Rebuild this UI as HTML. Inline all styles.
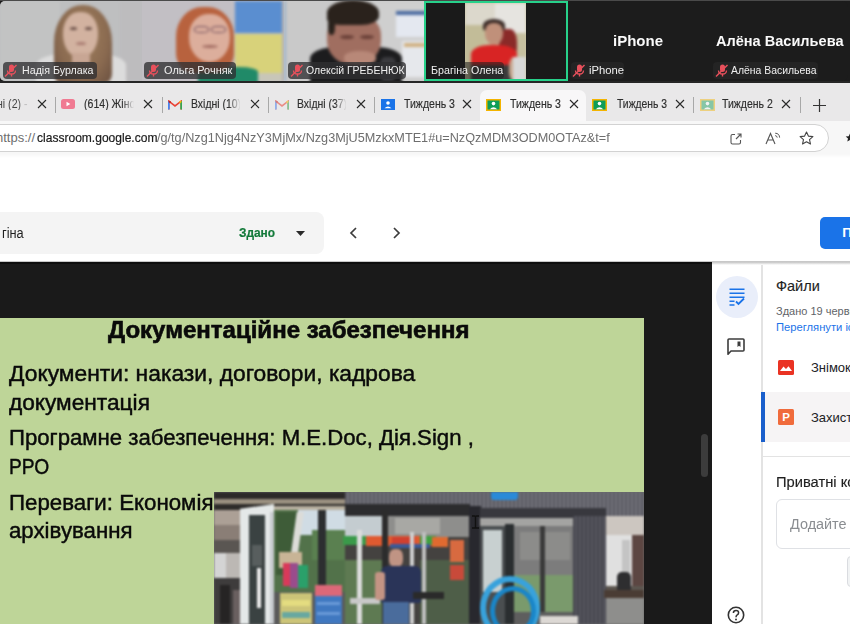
<!DOCTYPE html>
<html><head><meta charset="utf-8">
<style>
*{margin:0;padding:0;box-sizing:border-box}
html,body{width:850px;height:624px;overflow:hidden}
body{position:relative;font-family:"Liberation Sans",sans-serif;background:#fff}
.a{position:absolute}
.t{position:absolute;white-space:nowrap;line-height:1}
.blur{filter:blur(2px)}
</style></head><body>

<!-- ============ ZOOM STRIP ============ -->
<div class="a" id="zoom" style="left:0;top:0;width:850px;height:83px;background:#1c1c1c;overflow:hidden">
<div class="a" style="left:0;top:1px;width:142px;height:80px;overflow:hidden;border-radius:5px 0 0 5px;background:#bebfc0">
<div class="a" style="left:0;top:0;width:142px;height:80px;filter:blur(1.6px)">
<div class="a" style="left:0px;top:0px;width:60px;height:80px;background:#c2c3c3;"></div>
<div class="a" style="left:120px;top:0px;width:22px;height:80px;background:#bdbcbe;"></div>
<div class="a" style="left:36px;top:52px;width:90px;height:30px;background:#dcdcdc;border-radius:40% 40% 0 0"></div>
<div class="a" style="left:54px;top:4px;width:58px;height:78px;background:radial-gradient(ellipse at 50% 40%,#a0805e 0,#8a6a50 60%,#6a5040 100%);border-radius:48% 48% 12% 12%"></div>
<div class="a" style="left:63px;top:11px;width:35px;height:46px;background:#d2b2a0;border-radius:45% 45% 50% 50%"></div>
<div class="a" style="left:72px;top:52px;width:18px;height:10px;background:#c8a694;"></div>
<div class="a" style="left:70px;top:26px;width:7px;height:3px;background:#6a5048;border-radius:50%"></div>
<div class="a" style="left:85px;top:26px;width:7px;height:3px;background:#6a5048;border-radius:50%"></div>
<div class="a" style="left:76px;top:41px;width:10px;height:3px;background:#a87a70;border-radius:50%"></div>
</div>
</div>
<div class="a" style="left:3px;top:62px;width:94px;height:17px;background:rgba(48,48,50,0.78);border-radius:4px"></div>
<svg class="a" style="left:4px;top:64px" width="13" height="13" viewBox="0 0 13 13"><rect x="5" y="0.5" width="5" height="7.5" rx="2.5" fill="#e8505c"/><path d="M3.5 6.5 Q3.5 10 7.5 10 Q11.5 10 11.5 6.5" stroke="#e8505c" stroke-width="1.3" fill="none"/><rect x="6.8" y="10" width="1.4" height="2.5" fill="#e8505c"/><line x1="1" y1="12.5" x2="12.5" y2="1" stroke="#e8505c" stroke-width="1.4"/></svg>
<div class="t" style="left:21.8px;top:65.3px;font-size:11.5px;color:#f0f0f0;transform-origin:0 0;transform:scaleX(0.927)">Надія Бурлака</div>
<div class="a" style="left:142px;top:1px;width:142px;height:80px;overflow:hidden;background:#c2bfc4">
<div class="a" style="left:0;top:0;width:142px;height:80px;filter:blur(1.6px)">
<div class="a" style="left:93px;top:0px;width:49px;height:32px;background:#5a8ed0;"></div>
<div class="a" style="left:93px;top:33px;width:49px;height:39px;background:#d8d27a;"></div>
<div class="a" style="left:93px;top:72px;width:49px;height:8px;background:#c8c6b8;"></div>
<div class="a" style="left:140px;top:0px;width:2px;height:80px;background:#b0b0b0;"></div>
<div class="a" style="left:56px;top:66px;width:60px;height:16px;background:#208a68;border-radius:30% 30% 0 0"></div>
<div class="a" style="left:34px;top:6px;width:58px;height:66px;background:#b8623e;border-radius:45% 45% 30% 30%"></div>
<div class="a" style="left:47px;top:13px;width:41px;height:48px;background:#dcae9c;border-radius:45% 45% 50% 50%"></div>
<div class="a" style="left:52px;top:25px;width:15px;height:7px;border:1.5px solid #6a4a5a;border-radius:40%"></div>
<div class="a" style="left:69px;top:25px;width:15px;height:7px;border:1.5px solid #6a4a5a;border-radius:40%"></div>
<div class="a" style="left:60px;top:44px;width:16px;height:3px;background:#a06a60;border-radius:50%"></div>
</div>
</div>
<div class="a" style="left:144px;top:62px;width:92px;height:17px;background:rgba(48,48,50,0.78);border-radius:4px"></div>
<svg class="a" style="left:146px;top:64px" width="13" height="13" viewBox="0 0 13 13"><rect x="5" y="0.5" width="5" height="7.5" rx="2.5" fill="#e8505c"/><path d="M3.5 6.5 Q3.5 10 7.5 10 Q11.5 10 11.5 6.5" stroke="#e8505c" stroke-width="1.3" fill="none"/><rect x="6.8" y="10" width="1.4" height="2.5" fill="#e8505c"/><line x1="1" y1="12.5" x2="12.5" y2="1" stroke="#e8505c" stroke-width="1.4"/></svg>
<div class="t" style="left:163.8px;top:65.3px;font-size:11.5px;color:#f0f0f0;transform-origin:0 0;transform:scaleX(0.95)">Ольга Рочняк</div>
<div class="a" style="left:284px;top:1px;width:140px;height:80px;overflow:hidden;background:#c9c9c9">
<div class="a" style="left:0;top:0;width:141px;height:80px;filter:blur(1.5px)">
<div class="a" style="left:0px;top:0px;width:2px;height:80px;background:#9ab0c8;"></div>
<div class="a" style="left:80px;top:0px;width:62px;height:80px;background:#cfcfcf;"></div>
<div class="a" style="left:112px;top:10px;width:30px;height:26px;background:#e4e8f0;"></div>
<div class="a" style="left:112px;top:10px;width:30px;height:4px;background:#4a6aa0;"></div>
<div class="a" style="left:118px;top:40px;width:24px;height:36px;background:#e6e8ec;"></div>
<div class="a" style="left:120px;top:42px;width:22px;height:4px;background:#d0b080;"></div>
<div class="a" style="left:26px;top:46px;width:92px;height:38px;background:#1c1c1e;border-radius:30% 30% 0 0"></div>
<div class="a" style="left:43px;top:14px;width:54px;height:50px;background:#a06e60;border-radius:40% 40% 48% 48%"></div>
<div class="a" style="left:43px;top:-1px;width:52px;height:25px;background:#2a221c;border-radius:50% 50% 35% 25%"></div>
<div class="a" style="left:44px;top:16px;width:7px;height:18px;background:#2a221c;border-radius:40%"></div>
<div class="a" style="left:56px;top:34px;width:14px;height:4px;background:#6a4038;border-radius:50%"></div>
<div class="a" style="left:76px;top:34px;width:14px;height:4px;background:#6a4038;border-radius:50%"></div>
<div class="a" style="left:60px;top:50px;width:32px;height:14px;background:#b88878;border-radius:45%"></div>
<div class="a" style="left:96px;top:56px;width:16px;height:24px;background:#3a3a3e;border-radius:30%"></div>
</div>
</div>
<div class="a" style="left:288px;top:62px;width:118px;height:17px;background:rgba(48,48,50,0.78);border-radius:4px"></div>
<svg class="a" style="left:290px;top:64px" width="13" height="13" viewBox="0 0 13 13"><rect x="5" y="0.5" width="5" height="7.5" rx="2.5" fill="#e8505c"/><path d="M3.5 6.5 Q3.5 10 7.5 10 Q11.5 10 11.5 6.5" stroke="#e8505c" stroke-width="1.3" fill="none"/><rect x="6.8" y="10" width="1.4" height="2.5" fill="#e8505c"/><line x1="1" y1="12.5" x2="12.5" y2="1" stroke="#e8505c" stroke-width="1.4"/></svg>
<div class="t" style="left:305.8px;top:65.3px;font-size:11.5px;color:#f0f0f0;transform-origin:0 0;transform:scaleX(0.91)">Олексій ГРЕБЕНЮК</div>
<div class="a" style="left:424px;top:1px;width:144px;height:80px;background:#1a1a1a;border:2px solid #27d18a;overflow:hidden">
<div class="a" style="left:39px;top:0;width:61px;height:80px;overflow:hidden;background:#c6c0a0">
<div class="a" style="left:0;top:0;width:61px;height:80px;filter:blur(1.4px)">
<div class="a" style="left:0px;top:0px;width:61px;height:22px;background:#dcd8cc;"></div>
<div class="a" style="left:30px;top:0px;width:31px;height:30px;background:#e6e4e0;"></div>
<div class="a" style="left:0px;top:22px;width:20px;height:58px;background:#c2bc98;"></div>
<div class="a" style="left:34px;top:26px;width:18px;height:32px;background:#8a2a28;border-radius:40%"></div>
<div class="a" style="left:18px;top:16px;width:22px;height:12px;background:#3a2a26;border-radius:50% 50% 20% 20%"></div>
<div class="a" style="left:20px;top:20px;width:18px;height:22px;background:#c0907a;border-radius:40% 40% 50% 50%"></div>
<div class="a" style="left:6px;top:42px;width:46px;height:24px;background:#d82424;border-radius:40% 40% 10% 10%"></div>
<div class="a" style="left:6px;top:62px;width:46px;height:18px;background:#3a3a3a;"></div>
<div class="a" style="left:44px;top:54px;width:12px;height:24px;background:#c8a890;border-radius:40%"></div>
<div class="a" style="left:48px;top:54px;width:13px;height:26px;background:#d8d8d8;"></div>
</div>
</div>
</div>
<div class="a" style="left:428px;top:62px;width:76px;height:17px;background:rgba(30,30,30,0.55);border-radius:4px"></div>
<div class="t" style="left:431px;top:65.3px;font-size:11.5px;color:#f0f0f0;transform-origin:0 0;transform:scaleX(0.93)">Брагіна Олена</div>
<div class="a" style="left:568px;top:1px;width:142px;height:80px;background:#1c1c1c;"></div>
<div class="t" style="left:613.2px;top:33.6px;font-size:14.5px;font-weight:bold;color:#fafafa;transform-origin:0 0;transform:scaleX(1.035)">iPhone</div>
<div class="a" style="left:571px;top:62px;width:53px;height:17px;background:#242424;border-radius:4px"></div>
<svg class="a" style="left:572px;top:64px" width="13" height="13" viewBox="0 0 13 13"><rect x="5" y="0.5" width="5" height="7.5" rx="2.5" fill="#e8505c"/><path d="M3.5 6.5 Q3.5 10 7.5 10 Q11.5 10 11.5 6.5" stroke="#e8505c" stroke-width="1.3" fill="none"/><rect x="6.8" y="10" width="1.4" height="2.5" fill="#e8505c"/><line x1="1" y1="12.5" x2="12.5" y2="1" stroke="#e8505c" stroke-width="1.4"/></svg>
<div class="t" style="left:589.3px;top:65.3px;font-size:11.5px;color:#f0f0f0;transform-origin:0 0;transform:scaleX(0.98)">iPhone</div>
<div class="a" style="left:710px;top:1px;width:138px;height:80px;background:#1c1c1c;border-radius:0 6px 6px 0"></div>
<div class="t" style="left:716.1px;top:33.6px;font-size:14.5px;font-weight:bold;color:#fafafa;transform-origin:0 0;transform:scaleX(1.003)">Алёна Васильева</div>
<div class="a" style="left:713px;top:62px;width:105px;height:17px;background:#242424;border-radius:4px"></div>
<svg class="a" style="left:715px;top:64px" width="13" height="13" viewBox="0 0 13 13"><rect x="5" y="0.5" width="5" height="7.5" rx="2.5" fill="#e8505c"/><path d="M3.5 6.5 Q3.5 10 7.5 10 Q11.5 10 11.5 6.5" stroke="#e8505c" stroke-width="1.3" fill="none"/><rect x="6.8" y="10" width="1.4" height="2.5" fill="#e8505c"/><line x1="1" y1="12.5" x2="12.5" y2="1" stroke="#e8505c" stroke-width="1.4"/></svg>
<div class="t" style="left:730.5px;top:65.3px;font-size:11.5px;color:#f0f0f0;transform-origin:0 0;transform:scaleX(0.905)">Алёна Васильева</div>
<div class="a" style="left:0;top:0;width:850px;height:1px;background:#4a4a4a"></div>
<div class="a" style="left:0;top:81px;width:850px;height:2px;background:#262626"></div>
</div>

<!-- ============ TAB BAR ============ -->
<div class="a" id="tabs" style="left:0;top:83px;width:850px;height:38px;background:#e9e8e9;overflow:hidden">
<div class="a" style="left:480px;top:7px;width:106px;height:31px;background:#f8f7f8;border-radius:7px 7px 0 0"></div>
<div class="t" style="left:-2.7px;top:14.84px;font-size:12px;color:#444;transform-origin:0 0;transform:scaleX(0.88);-webkit-mask-image:linear-gradient(90deg,#000 70%,rgba(0,0,0,0.25) 90%)">ні (2) -</div>
<svg class="a" style="left:37px;top:16.400000000000006px" width="10" height="10" viewBox="0 0 10 10"><path d="M1 1L9 9M9 1L1 9" stroke="#2a2a2a" stroke-width="1.1"/></svg>
<div class="a" style="left:55px;top:13.5px;width:1px;height:16.0px;background:#a8a8a8;"></div>
<svg class="a" style="left:61px;top:16px" width="14" height="10" viewBox="0 0 14 10"><rect x="0" y="0" width="14" height="10" rx="2.5" fill="#f07a92"/><path d="M5.5 2.8L9.3 5L5.5 7.2Z" fill="#fff"/></svg>
<div class="t" style="left:84.2px;top:14.84px;font-size:12px;color:#2e2e2e;-webkit-text-stroke:0.15px #2e2e2e;transform-origin:0 0;transform:scaleX(0.88);-webkit-mask-image:linear-gradient(90deg,#000 75%,transparent 98%)">(614) Жіно</div>
<svg class="a" style="left:143px;top:16.400000000000006px" width="10" height="10" viewBox="0 0 10 10"><path d="M1 1L9 9M9 1L1 9" stroke="#2a2a2a" stroke-width="1.1"/></svg>
<div class="a" style="left:161.5px;top:13.5px;width:1.0px;height:16.0px;background:#a8a8a8;"></div>
<svg class="a" style="left:167.5px;top:16.5px;opacity:1" width="14" height="10" viewBox="0 0 14 10"><path d="M0.8 9.5V1.2L7 6L13.2 1.2V9.5" fill="none" stroke="#ea4335" stroke-width="1.6"/><path d="M0.8 9.5V1.2" stroke="#4285f4" stroke-width="1.8"/><path d="M13.2 9.5V1.2" stroke="#34a853" stroke-width="1.8"/><path d="M11.5 2.5L13.2 1.2" stroke="#fbbc04" stroke-width="1.8"/><path d="M0.8 1.2L2.6 2.5" stroke="#c5221f" stroke-width="1.8"/></svg>
<div class="t" style="left:190.7px;top:14.84px;font-size:12px;color:#2e2e2e;-webkit-text-stroke:0.15px #2e2e2e;transform-origin:0 0;transform:scaleX(0.87);-webkit-mask-image:linear-gradient(90deg,#000 75%,transparent 98%)">Вхідні (10)</div>
<svg class="a" style="left:249.5px;top:16.400000000000006px" width="10" height="10" viewBox="0 0 10 10"><path d="M1 1L9 9M9 1L1 9" stroke="#2a2a2a" stroke-width="1.1"/></svg>
<div class="a" style="left:268px;top:13.5px;width:1px;height:16.0px;background:#a8a8a8;"></div>
<svg class="a" style="left:274.5px;top:16.5px;opacity:0.55" width="14" height="10" viewBox="0 0 14 10"><path d="M0.8 9.5V1.2L7 6L13.2 1.2V9.5" fill="none" stroke="#ea4335" stroke-width="1.6"/><path d="M0.8 9.5V1.2" stroke="#4285f4" stroke-width="1.8"/><path d="M13.2 9.5V1.2" stroke="#34a853" stroke-width="1.8"/><path d="M11.5 2.5L13.2 1.2" stroke="#fbbc04" stroke-width="1.8"/><path d="M0.8 1.2L2.6 2.5" stroke="#c5221f" stroke-width="1.8"/></svg>
<div class="t" style="left:297.1px;top:14.84px;font-size:12px;color:#2e2e2e;-webkit-text-stroke:0.15px #2e2e2e;transform-origin:0 0;transform:scaleX(0.87);-webkit-mask-image:linear-gradient(90deg,#000 75%,transparent 98%)">Вхідні (37)</div>
<svg class="a" style="left:356px;top:16.400000000000006px" width="10" height="10" viewBox="0 0 10 10"><path d="M1 1L9 9M9 1L1 9" stroke="#2a2a2a" stroke-width="1.1"/></svg>
<div class="a" style="left:374.3px;top:13.5px;width:1.0px;height:16.0px;background:#a8a8a8;"></div>
<svg class="a" style="left:380.5px;top:16px" width="14" height="11" viewBox="0 0 14 11"><rect width="14" height="11" fill="#1a73e8"/><circle cx="7" cy="4" r="1.8" fill="#fff"/><path d="M3.5 9.3Q7 5.6 10.5 9.3Z" fill="#fff"/></svg>
<div class="t" style="left:403.5px;top:14.84px;font-size:12px;color:#2e2e2e;-webkit-text-stroke:0.15px #2e2e2e;transform-origin:0 0;transform:scaleX(0.877)">Тиждень 3</div>
<svg class="a" style="left:462.4px;top:16.400000000000006px" width="10" height="10" viewBox="0 0 10 10"><path d="M1 1L9 9M9 1L1 9" stroke="#2a2a2a" stroke-width="1.1"/></svg>
<svg class="a" style="left:486px;top:15.5px;opacity:1" width="15" height="12" viewBox="0 0 15 12"><rect x="0.75" y="0.75" width="13.5" height="10.5" fill="#0f9d58" stroke="#f4b400" stroke-width="1.5"/><circle cx="7.5" cy="4.6" r="1.8" fill="#fff"/><path d="M3.8 10.2 Q7.5 6.3 11.2 10.2Z" fill="#fff"/></svg>
<div class="t" style="left:510px;top:14.84px;font-size:12px;color:#2e2e2e;-webkit-text-stroke:0.15px #2e2e2e;transform-origin:0 0;transform:scaleX(0.877)">Тиждень 3</div>
<svg class="a" style="left:568.8px;top:16.400000000000006px" width="10" height="10" viewBox="0 0 10 10"><path d="M1 1L9 9M9 1L1 9" stroke="#2a2a2a" stroke-width="1.1"/></svg>
<svg class="a" style="left:592.2px;top:15.5px;opacity:1" width="15" height="12" viewBox="0 0 15 12"><rect x="0.75" y="0.75" width="13.5" height="10.5" fill="#0f9d58" stroke="#f4b400" stroke-width="1.5"/><circle cx="7.5" cy="4.6" r="1.8" fill="#fff"/><path d="M3.8 10.2 Q7.5 6.3 11.2 10.2Z" fill="#fff"/></svg>
<div class="t" style="left:616.5px;top:14.84px;font-size:12px;color:#2e2e2e;-webkit-text-stroke:0.15px #2e2e2e;transform-origin:0 0;transform:scaleX(0.862)">Тиждень 3</div>
<svg class="a" style="left:675.4px;top:16.400000000000006px" width="10" height="10" viewBox="0 0 10 10"><path d="M1 1L9 9M9 1L1 9" stroke="#2a2a2a" stroke-width="1.1"/></svg>
<div class="a" style="left:692.9px;top:13.5px;width:1.0px;height:16.0px;background:#a8a8a8;"></div>
<svg class="a" style="left:699.6px;top:15.5px;opacity:0.45" width="15" height="12" viewBox="0 0 15 12"><rect x="0.75" y="0.75" width="13.5" height="10.5" fill="#0f9d58" stroke="#f4b400" stroke-width="1.5"/><circle cx="7.5" cy="4.6" r="1.8" fill="#fff"/><path d="M3.8 10.2 Q7.5 6.3 11.2 10.2Z" fill="#fff"/></svg>
<div class="t" style="left:721.9px;top:14.84px;font-size:12px;color:#2e2e2e;-webkit-text-stroke:0.15px #2e2e2e;transform-origin:0 0;transform:scaleX(0.875)">Тиждень 2</div>
<svg class="a" style="left:781.2px;top:16.400000000000006px" width="10" height="10" viewBox="0 0 10 10"><path d="M1 1L9 9M9 1L1 9" stroke="#2a2a2a" stroke-width="1.1"/></svg>
<div class="a" style="left:799.6px;top:13.5px;width:1.0px;height:16.0px;background:#a8a8a8;"></div>
<svg class="a" style="left:813px;top:15.799999999999997px" width="13" height="13" viewBox="0 0 13 13"><path d="M6.5 0V13M0 6.5H13" stroke="#333" stroke-width="1.2"/></svg>
</div>

<!-- ============ TOOLBAR ============ -->
<div class="a" id="toolbar" style="left:0;top:121px;width:850px;height:38px;background:linear-gradient(#f7f7f7 0,#f7f7f7 33px,#fff 37px);overflow:hidden">
  <div class="a" style="left:-20px;top:2.5px;width:849px;height:28px;background:#fff;border:1px solid #d2d2d2;border-radius:14px"></div>
<div class="t" style="left:-4px;top:10.20px;font-size:13px;color:#6e6e6e">https://</div>
<div class="t" style="left:36.7px;top:10.20px;font-size:13px;color:#1a1a1a;-webkit-text-stroke:0.2px #1a1a1a;transform-origin:0 0;transform:scaleX(0.926)">classroom.google.com</div>
<div class="t" style="left:157.2px;top:10.20px;font-size:13px;color:#6e6e6e;transform-origin:0 0;transform:scaleX(0.975)">/g/tg/Nzg1Njg4NzY3MjMx/Nzg3MjU5MzkxMTE1#u=NzQzMDM3ODM0OTAz&amp;t=f</div>
<svg class="a" style="left:729.5px;top:11.5px" width="12" height="12" viewBox="0 0 12 12"><path d="M5 1.5H2.5Q1 1.5 1 3V9.5Q1 11 2.5 11H9Q10.5 11 10.5 9.5V7" fill="none" stroke="#555" stroke-width="1.1"/><path d="M6 6L11 1M7.5 1H11V4.5" fill="none" stroke="#555" stroke-width="1.1"/></svg>
<svg class="a" style="left:764.5px;top:10.5px" width="16" height="13" viewBox="0 0 16 13"><path d="M1 12L5.5 1.5L10 12M2.7 8H8.3" fill="none" stroke="#555" stroke-width="1.1"/><path d="M10.2 3.6A2.2 2.2 0 0 1 12.2 5.6M10.2 1.2A4.6 4.6 0 0 1 14.6 5.6" fill="none" stroke="#555" stroke-width="1"/></svg>
<svg class="a" style="left:799px;top:9.5px" width="15" height="14" viewBox="0 0 15 14"><path d="M7.5 1L9.4 5.1L13.9 5.6L10.5 8.6L11.5 13L7.5 10.7L3.5 13L4.5 8.6L1.1 5.6L5.6 5.1Z" fill="none" stroke="#444" stroke-width="1.1" stroke-linejoin="round"/></svg>
<svg class="a" style="left:845px;top:12px" width="10" height="10" viewBox="0 0 10 10"><path d="M5 0.5L6.3 3.3L9.3 3.6L7 5.6L7.7 8.6L5 7L2.3 8.6L3 5.6L0.7 3.6L3.7 3.3Z" fill="#222"/></svg>

</div>

<!-- ============ CLASSROOM HEADER ============ -->
<div class="a" id="header" style="left:0;top:159px;width:850px;height:103px;background:#fff">
  <div class="a" style="left:-20px;top:53px;width:343.5px;height:41.5px;background:#f4f4f4;border-radius:8px"></div>
  <div class="t" style="left:1.6px;top:67.5px;font-size:13.8px;color:#1f1f1f;transform-origin:0 0;transform:scaleX(0.93)">гіна</div>
  <div class="t" style="left:238.9px;top:66.80px;font-size:13px;font-weight:bold;color:#137a3a;-webkit-text-stroke:0.2px #137a3a;transform-origin:0 0;transform:scaleX(0.914)">Здано</div>
  <svg class="a" style="left:295.5px;top:72px" width="9" height="5" viewBox="0 0 9 5"><path d="M0 0H9L4.5 5Z" fill="#2a2a2a"/></svg>
  <svg class="a" style="left:349px;top:68px" width="9" height="12" viewBox="0 0 9 12"><path d="M7 1L2 6L7 11" fill="none" stroke="#3c3c3c" stroke-width="1.7"/></svg>
  <svg class="a" style="left:392px;top:68px" width="9" height="12" viewBox="0 0 9 12"><path d="M2 1L7 6L2 11" fill="none" stroke="#3c3c3c" stroke-width="1.7"/></svg>
  <div class="a" style="left:820px;top:58px;width:60px;height:31.5px;background:#1a73e8;border-radius:5px"></div>
  <div class="t" style="left:842.2px;top:67.27px;font-size:13.5px;font-weight:bold;color:#fff">П</div>
  <div class="a" style="left:0;top:101.5px;width:850px;height:1.5px;background:#c8c8c8"></div>
</div>

<!-- ============ VIEWER ============ -->
<div class="a" id="viewer" style="left:0;top:262px;width:712px;height:362px;background:#1a1a1a;overflow:hidden">
  <div class="a" style="left:0;top:0;width:712px;height:2px;background:#0e0e0e"></div>
  <div class="a" id="slide" style="left:0;top:56px;width:644px;height:306px;background:#bed598;overflow:hidden">
    <div class="t" style="left:108px;top:0.5px;font-size:23px;font-weight:bold;color:#0a0a0a;-webkit-text-stroke:0.6px #0a0a0a;transform-origin:0 0;transform:scaleX(1.0445)">Документаційне забезпечення</div>
    <div class="t" style="left:8.5px;top:45.4px;font-size:22px;color:#0a0a0a;-webkit-text-stroke:0.45px #0a0a0a;transform-origin:0 0;transform:scaleX(1.037)">Документи: накази, договори, кадрова</div>
    <div class="t" style="left:8.5px;top:73.7px;font-size:22px;color:#0a0a0a;-webkit-text-stroke:0.45px #0a0a0a;transform-origin:0 0;transform:scaleX(1.031)">документація</div>
    <div class="t" style="left:8.5px;top:109.4px;font-size:22px;color:#0a0a0a;-webkit-text-stroke:0.45px #0a0a0a;transform-origin:0 0;transform:scaleX(1.008)">Програмне забезпечення: M.E.Doc, Дія.Sign ,</div>
    <div class="t" style="left:8.5px;top:137.8px;font-size:22px;color:#0a0a0a;-webkit-text-stroke:0.45px #0a0a0a;transform-origin:0 0;transform:scaleX(0.872)">РРО</div>
    <div class="t" style="left:8.5px;top:173.6px;font-size:22px;color:#0a0a0a;-webkit-text-stroke:0.45px #0a0a0a;transform-origin:0 0;transform:scaleX(1.013)">Переваги: Економія</div>
    <div class="t" style="left:8.5px;top:201.9px;font-size:22px;color:#0a0a0a;-webkit-text-stroke:0.45px #0a0a0a;transform-origin:0 0;transform:scaleX(1.011)">архівування</div>
    <div class="a" id="photo" style="left:214px;top:174px;width:430px;height:132px;background:#6a6a6a;overflow:hidden"><div class="a" style="left:0;top:0;width:430px;height:132px;filter:blur(1px)">
<div class="a" style="left:0px;top:0px;width:430px;height:132px;background:#5a5a5a;"></div>
<div class="a" style="left:0px;top:13px;width:31px;height:40px;background:#8a7e76;"></div>
<div class="a" style="left:0px;top:18px;width:31px;height:15px;background:#aca096;"></div>
<div class="a" style="left:0px;top:48px;width:31px;height:16px;background:#5a5652;"></div>
<div class="a" style="left:0px;top:61px;width:31px;height:29px;background:#d4d4d4;"></div>
<div class="a" style="left:12px;top:61px;width:14px;height:47px;background:#bcb8b4;"></div>
<div class="a" style="left:0px;top:86px;width:31px;height:46px;background:#3e3c3c;"></div>
<div class="a" style="left:6px;top:93px;width:10px;height:39px;background:#262424;"></div>
<div class="a" style="left:19px;top:98px;width:7px;height:34px;background:#6a6060;"></div>
<div class="a" style="left:0px;top:0px;width:136px;height:7px;background:#2c2a28;"></div>
<div class="a" style="left:0px;top:7px;width:136px;height:5px;background:#9a9080;"></div>
<div class="a" style="left:0px;top:12px;width:136px;height:6px;background:#2e2c2a;"></div>
<div class="a" style="left:58px;top:14px;width:73px;height:5px;background:#b8b0a0;"></div>
<div class="a" style="left:59px;top:18px;width:72px;height:82px;background:#52724a;"></div>
<div class="a" style="left:84px;top:18px;width:47px;height:25px;background:#d0dce4;"></div>
<div class="a" style="left:62px;top:20px;width:22px;height:63px;background:#3e5c38;"></div>
<div class="a" style="left:98px;top:38px;width:33px;height:30px;background:#5a8050;"></div>
<div class="a" style="left:78px;top:20px;width:7px;height:68px;background:#dcdcd8;transform:skewX(-8deg)"></div>
<div class="a" style="left:104px;top:18px;width:8px;height:82px;background:#2c2e30;"></div>
<div class="a" style="left:65px;top:60px;width:23px;height:16px;background:#c8b496;"></div>
<div class="a" style="left:69px;top:71px;width:7px;height:23px;background:#d83a5a;"></div>
<div class="a" style="left:76px;top:71px;width:8px;height:25px;background:#9a4c8c;"></div>
<div class="a" style="left:84px;top:73px;width:10px;height:23px;background:#2aa06a;"></div>
<div class="a" style="left:26px;top:12px;width:34px;height:120px;background:#e4e8e8;clip-path:polygon(0 4%,100% 0,100% 100%,0 100%)"></div>
<div class="a" style="left:35px;top:23px;width:16px;height:109px;background:#3a4242;"></div>
<div class="a" style="left:38px;top:53px;width:10px;height:21px;background:#585e5e;"></div>
<div class="a" style="left:43px;top:76px;width:4px;height:40px;background:#ececec;"></div>
<div class="a" style="left:56px;top:20px;width:4px;height:112px;background:#c8ccd0;"></div>
<div class="a" style="left:66px;top:101px;width:32px;height:31px;background:#ccc478;"></div>
<div class="a" style="left:68px;top:108px;width:28px;height:6px;background:#e4dc80;"></div>
<div class="a" style="left:68px;top:120px;width:28px;height:6px;background:#68a8a0;"></div>
<div class="a" style="left:101px;top:93px;width:27px;height:39px;background:#4078c0;"></div>
<div class="a" style="left:101px;top:93px;width:27px;height:11px;background:#dc6878;"></div>
<div class="a" style="left:103px;top:110px;width:23px;height:3px;background:#6a9ad8;"></div>
<div class="a" style="left:103px;top:120px;width:23px;height:3px;background:#6a9ad8;"></div>
<div class="a" style="left:131px;top:0px;width:299px;height:27px;background:#64646c;background-image:repeating-linear-gradient(90deg,#5a5a62 0 2px,#72727a 2px 4px);clip-path:polygon(0 0,100% 0,100% 100%,0 48%)"></div>
<div class="a" style="left:131px;top:12px;width:125px;height:12px;background:#2c2c2e;"></div>
<div class="a" style="left:131px;top:24px;width:125px;height:108px;background:#444240;"></div>
<div class="a" style="left:131px;top:24px;width:125px;height:21px;background:#8e8e8c;"></div>
<div class="a" style="left:131px;top:24px;width:37px;height:24px;background:#c4ccd0;"></div>
<div class="a" style="left:181px;top:26px;width:45px;height:16px;background:#a8a8a4;"></div>
<div class="a" style="left:131px;top:68px;width:37px;height:64px;background:#5e7a52;"></div>
<div class="a" style="left:206px;top:68px;width:50px;height:64px;background:#4e5e48;"></div>
<div class="a" style="left:129px;top:44px;width:23px;height:9px;background:#3a9a4a;"></div>
<div class="a" style="left:152px;top:44px;width:66px;height:10px;background:#e05a30;"></div>
<div class="a" style="left:178px;top:45px;width:23px;height:7px;background:#d04030;"></div>
<div class="a" style="left:206px;top:44px;width:16px;height:9px;background:#40a040;"></div>
<div class="a" style="left:218px;top:45px;width:16px;height:10px;background:#e06a30;"></div>
<div class="a" style="left:176px;top:52px;width:40px;height:4px;background:#3a5a9a;"></div>
<div class="a" style="left:143px;top:38px;width:5px;height:94px;background:#dcdcdc;"></div>
<div class="a" style="left:196px;top:40px;width:4px;height:92px;background:#d0d0d0;"></div>
<div class="a" style="left:208px;top:40px;width:4px;height:92px;background:#c0c0c0;"></div>
<div class="a" style="left:168px;top:18px;width:6px;height:114px;background:#2c2c2c;"></div>
<div class="a" style="left:236px;top:48px;width:14px;height:22px;background:#d86a40;"></div>
<div class="a" style="left:236px;top:73px;width:14px;height:15px;background:#c84a3a;"></div>
<div class="a" style="left:136px;top:106px;width:30px;height:6px;background:#c8c8c8;"></div>
<div class="a" style="left:175px;top:57px;width:14px;height:18px;background:#c09484;border-radius:40%"></div>
<div class="a" style="left:167px;top:74px;width:40px;height:37px;background:#2a3458;border-radius:6px 6px 2px 2px"></div>
<div class="a" style="left:161px;top:80px;width:10px;height:28px;background:#c49484;border-radius:3px"></div>
<div class="a" style="left:169px;top:110px;width:26px;height:22px;background:#4a6c9c;"></div>
<div class="a" style="left:199px;top:100px;width:31px;height:7px;background:#2a2a2a;"></div>
<div class="a" style="left:255px;top:14px;width:12px;height:118px;background:#28282e;"></div>
<div class="a" style="left:277px;top:0px;width:27px;height:8px;background:#2a8ad8;border-radius:0 0 3px 3px"></div>
<div class="a" style="left:266px;top:16px;width:126px;height:16px;background:#38383e;"></div>
<div class="a" style="left:266px;top:26px;width:96px;height:8px;background:#a4a4a2;"></div>
<div class="a" style="left:266px;top:34px;width:36px;height:98px;background:#4a4e50;"></div>
<div class="a" style="left:269px;top:38px;width:19px;height:62px;background:#c8d0d0;"></div>
<div class="a" style="left:291px;top:32px;width:9px;height:100px;background:#2a2e30;"></div>
<div class="a" style="left:300px;top:34px;width:60px;height:86px;background:#7c7c7c;"></div>
<div class="a" style="left:306px;top:40px;width:50px;height:28px;background:#8c8c8a;"></div>
<div class="a" style="left:300px;top:83px;width:60px;height:37px;background:#7a9a6c;"></div>
<div class="a" style="left:326px;top:34px;width:5px;height:86px;background:#3a3a3a;"></div>
<div class="a" style="left:300px;top:120px;width:60px;height:12px;background:#5e5e5e;"></div>
<div class="a" style="left:359px;top:24px;width:33px;height:108px;background:#4c4c54;background-image:repeating-linear-gradient(90deg,#46464e 0 2px,#585860 2px 4px)"></div>
<div class="a" style="left:392px;top:24px;width:38px;height:19px;background:#ccc6c0;"></div>
<div class="a" style="left:392px;top:43px;width:26px;height:51px;background:#e0e0e0;"></div>
<div class="a" style="left:408px;top:48px;width:8px;height:46px;background:#c4c4c4;"></div>
<div class="a" style="left:418px;top:43px;width:12px;height:61px;background:#5c4642;"></div>
<div class="a" style="left:392px;top:94px;width:38px;height:38px;background:#5c5650;"></div>
<div class="a" style="left:403px;top:80px;width:14px;height:20px;background:#2e2e30;border-radius:5px 5px 2px 2px"></div>
<div class="a" style="left:390px;top:98px;width:40px;height:8px;background:#4a3c34;"></div>
<div class="a" style="left:392px;top:106px;width:38px;height:26px;background:#8e8e8c;"></div>
<div class="a" style="left:266px;top:84px;width:60px;height:64px;border:6px solid #38a2dc;border-radius:50%"></div>
<div class="a" style="left:276px;top:94px;width:46px;height:50px;border:5px solid #1a86c8;border-radius:50%"></div>
<div class="a" style="left:326px;top:124px;width:38px;height:8px;background:#dcd8d4;"></div>
</div>
    </div>
    <svg class="a" style="left:471px;top:197px" width="9" height="14" viewBox="0 0 9 14"><path d="M1 1H3.5Q4.5 1 4.5 2V12Q4.5 13 3.5 13H1M8 1H5.5Q4.5 1 4.5 2V12Q4.5 13 5.5 13H8" fill="none" stroke="#111" stroke-width="1.4"/></svg>

  </div>
  <div class="a" style="left:701px;top:172px;width:7px;height:43px;background:#3c3c3c;border-radius:4px"></div>
</div>

<!-- ============ SIDEBAR ============ -->
<div class="a" id="sidebar" style="left:712px;top:262px;width:138px;height:362px;background:#fff;overflow:hidden">
  <div class="a" style="left:49px;top:0;width:1.5px;height:362px;background:#e3e3e3"></div>
  <div class="a" style="left:3.5px;top:14px;width:42px;height:42px;border-radius:50%;background:#e9eefa"></div>
  <svg class="a" style="left:16.5px;top:26px" width="16" height="18" viewBox="0 0 16 18"><path d="M0.5 1.2H15.5M0.5 5.2H15.5M0.5 9.2H15.5M0.5 13.2H5.5M0.5 17H5.5" stroke="#1a73e8" stroke-width="1.6"/><path d="M7 13.5L9.5 16L15 10.5" fill="none" stroke="#1a73e8" stroke-width="1.8"/></svg>
  <svg class="a" style="left:15px;top:76px" width="18" height="17" viewBox="0 0 18 17"><path d="M1 16.2V2Q1 1 2 1H16Q17 1 17 2V12Q17 13 16 13H4Z" fill="none" stroke="#3c3c3c" stroke-width="1.6" stroke-linejoin="round"/><path d="M10.5 3.5H13.5V9L12 7.8L10.5 9Z" fill="#3c3c3c"/></svg>
  <svg class="a" style="left:15px;top:343.5px" width="18" height="18" viewBox="0 0 18 18"><circle cx="9" cy="9" r="7.7" fill="none" stroke="#333" stroke-width="1.6"/><path d="M6.4 7.1Q6.4 4.6 9 4.6Q11.6 4.6 11.6 6.8Q11.6 8.2 10.2 8.9Q9 9.6 9 11.3" fill="none" stroke="#333" stroke-width="1.5"/><circle cx="9" cy="13.5" r="0.95" fill="#333"/></svg>

  <div class="a" style="left:0;top:0;width:138px;height:3px;background:linear-gradient(#c4c4c4,#fff)"></div>

  <div class="t" style="left:64.00px;top:17.3px;font-size:14.5px;color:#1f1f1f;-webkit-text-stroke:0.15px #1f1f1f">Файли</div>
  <div class="t" style="left:64.00px;top:43.59px;font-size:11px;color:#5f6368">Здано 19 червня</div>
  <div class="t" style="left:64.00px;top:60.22px;font-size:11.2px;color:#1a73e8">Переглянути історію</div>

  <div class="a" style="left:66.10px;top:97.69999999999999px;width:15.7px;height:15.5px;background:#ea3323;border-radius:1.5px"></div>
  <svg class="a" style="left:68.00px;top:104px" width="12" height="5" viewBox="0 0 12 5"><path d="M0 5L3.5 0.6L6 3L8.5 0.3L12 5Z" fill="#fff"/></svg>
  <div class="t" style="left:99.00px;top:99.00px;font-size:13px;color:#202124">Знімок екрана</div>

  <div class="a" style="left:52.5px;top:130.3px;width:90px;height:49.7px;background:#f6f4f5"></div>
  <div class="a" style="left:49.4px;top:130.3px;width:3.4px;height:49.7px;background:#1a5fcc"></div>
  <div class="a" style="left:66.10px;top:147px;width:15.7px;height:15.8px;background:#f06b3c;border-radius:1.5px"></div>
  <div class="t" style="left:70.30px;top:149.77px;font-size:11.5px;font-weight:bold;color:#fff">P</div>
  <div class="t" style="left:99.00px;top:148.90px;font-size:13px;color:#202124">Захист</div>

  <div class="a" style="left:50px;top:193.5px;width:90px;height:1px;background:#e3e3e3"></div>
  <div class="t" style="left:64.20px;top:213.05px;font-size:14px;color:#1f1f1f;-webkit-text-stroke:0.15px #1f1f1f;transform-origin:0 0;transform:scaleX(1.05)">Приватні коментарі</div>
  <div class="a" style="left:63.80px;top:237.2px;width:80px;height:49.4px;border:1px solid #dfe1e5;border-radius:6px"></div>
  <div class="t" style="left:77.70px;top:255.15px;font-size:14px;color:#8a8d91;transform-origin:0 0;transform:scaleX(1.03)">Додайте коментар</div>
  <div class="a" style="left:134.90px;top:294.4px;width:40px;height:30.3px;border:1px solid #dadce0;border-radius:4px;background:#f1f3f4"></div>
</div>
</body></html>
